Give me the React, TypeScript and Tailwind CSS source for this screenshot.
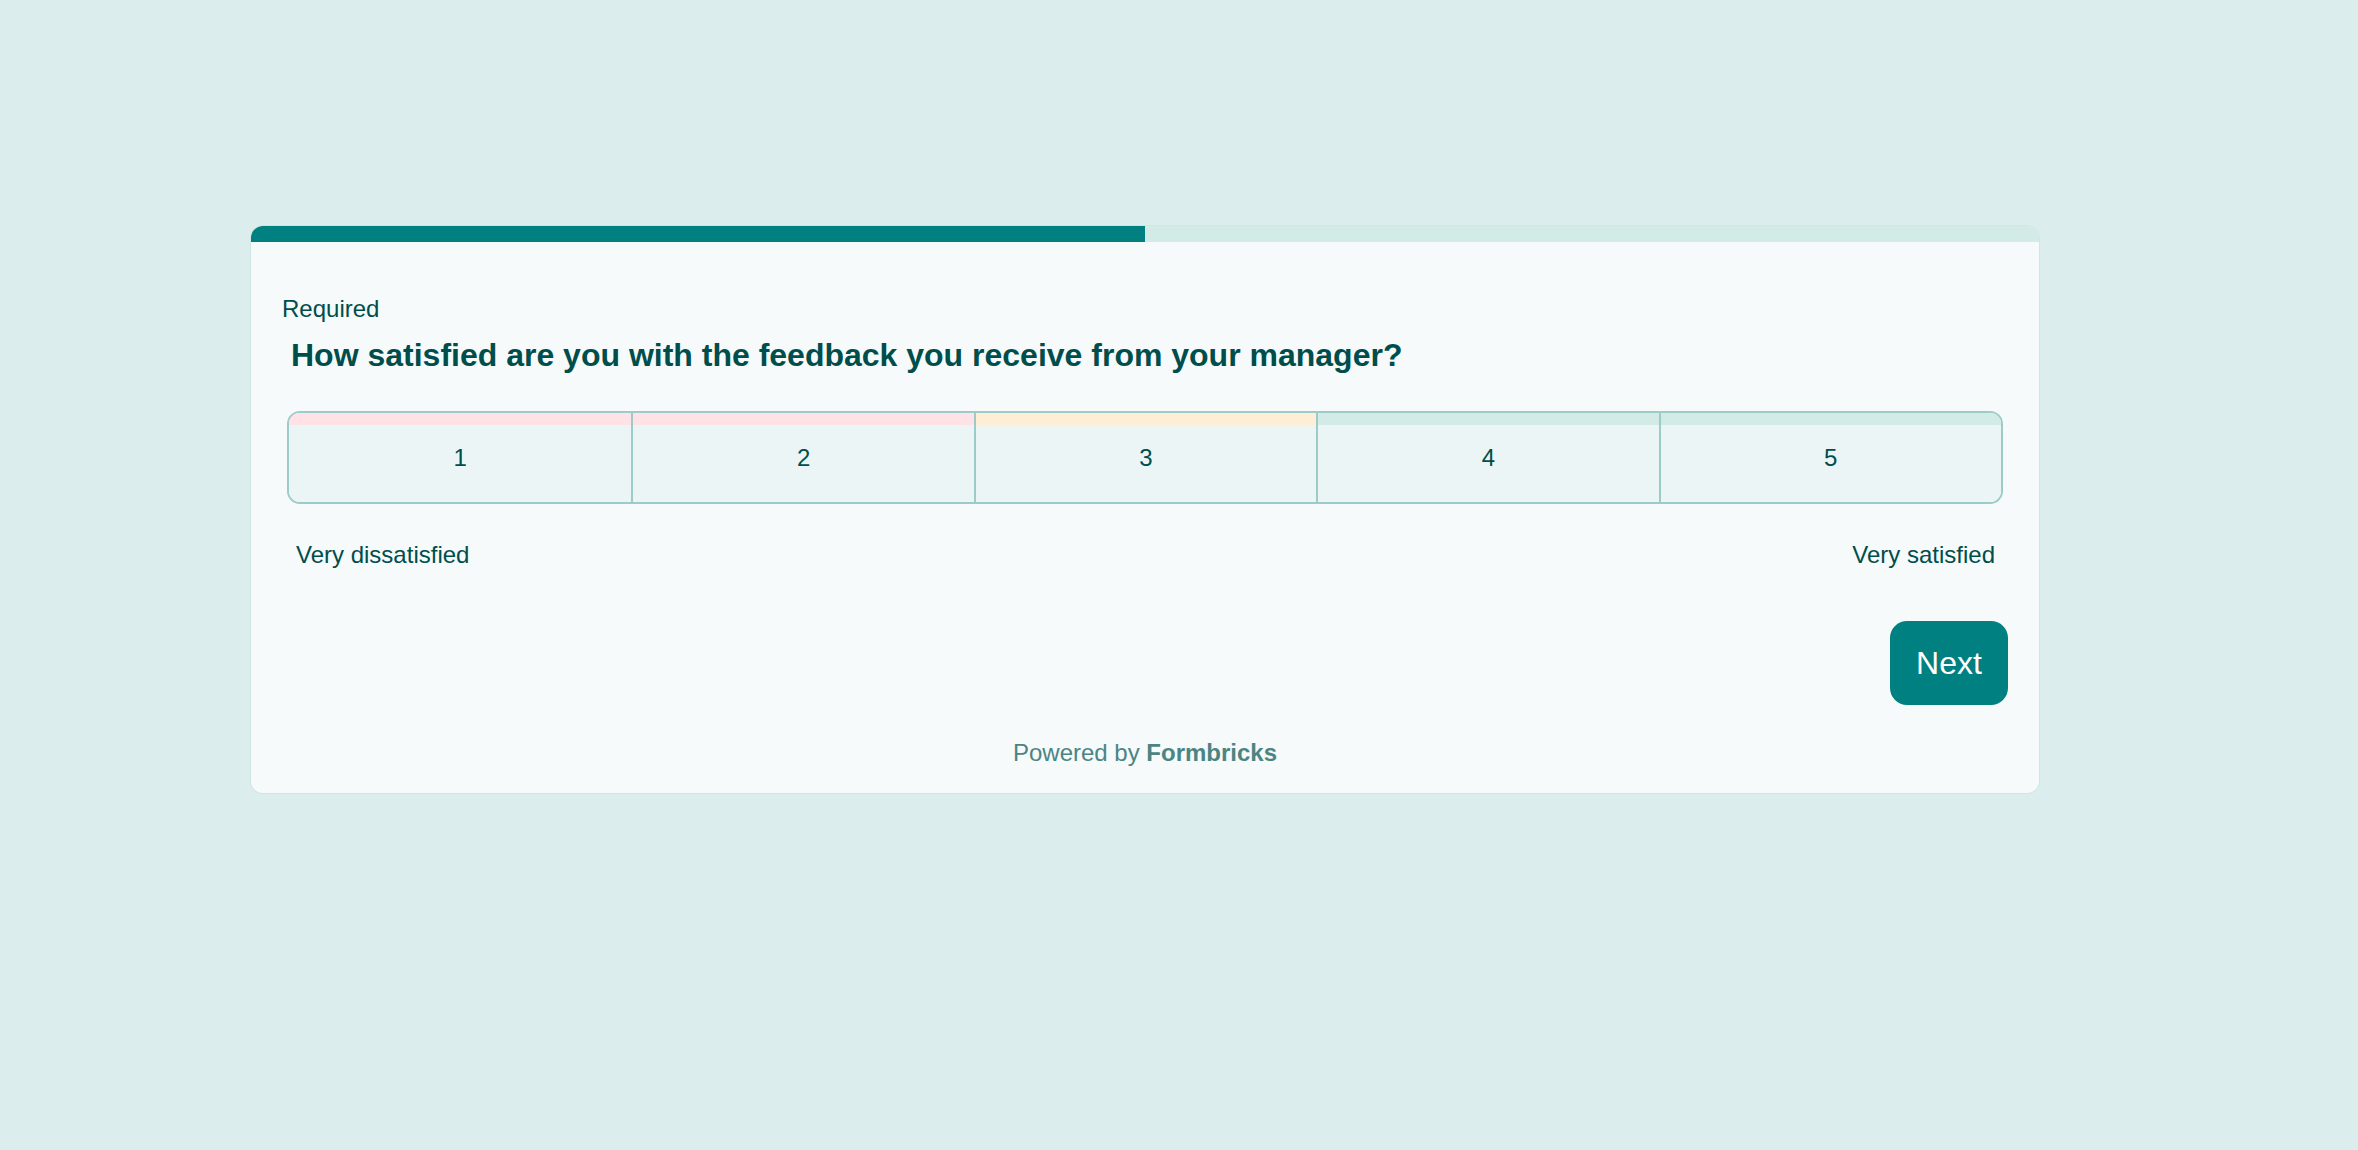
const ratings = [
  { value: 1, stripe: "bg-[#ffe2e5]" },
  { value: 2, stripe: "bg-[#ffe2e5]" },
  { value: 3, stripe: "bg-[#ffeed6]" },
  { value: 4, stripe: "bg-[#d2ebe6]" },
  { value: 5, stripe: "bg-[#d2ebe6]" },
];

export default function App() {
  return (
    <div className="min-h-[1150px] w-full bg-[#dbeeed] pl-[251px] pt-[226px] font-['Liberation_Sans',Arial,sans-serif] text-[#004e4b]">
      <div className="w-[1788px] overflow-hidden rounded-[12px] bg-[#f6fafb] shadow-[0_0_0_1px_#cfe7e3]">
        {/* progress */}
        <div className="flex h-[16px] w-full bg-[#d2ebe6]">
          <div className="h-full w-1/2 bg-[#008080]" />
        </div>

        <div className="flex flex-col px-[31px] pb-[24px] pt-[51px]">
          <p className="text-[24px] leading-[32px]">Required</p>
          <h1 className="mt-[10px] pl-[9px] text-[32px] font-bold leading-[40px]">
            How satisfied are you with the feedback you receive from your manager?
          </h1>

          <div className="mx-[5px] mt-[36px] grid grid-cols-5 overflow-hidden rounded-[13px] border-2 border-[#9ccbc8]">
            {ratings.map((r, i) => (
              <button
                key={r.value}
                type="button"
                className={`flex h-[89px] flex-col bg-[#ecf5f6] ${i > 0 ? "border-l-2 border-[#9ccbc8]" : ""}`}
              >
                <span className={`block h-[12px] w-full ${r.stripe}`} />
                <span className="flex flex-1 items-center justify-center pb-[12px] text-[24px] leading-[32px]">
                  {r.value}
                </span>
              </button>
            ))}
          </div>

          <div className="mt-[35px] flex justify-between pl-[14px] pr-[13px] text-[24px] leading-[32px]">
            <span>Very dissatisfied</span>
            <span>Very satisfied</span>
          </div>

          <div className="mt-[50px] flex justify-end">
            <button
              type="button"
              className="flex h-[84px] w-[118px] items-center justify-center rounded-[17px] bg-[#008080] text-[32px] text-white"
            >
              Next
            </button>
          </div>

          <p className="mt-[32px] text-center text-[24px] leading-[32px] text-[#4b8583]">
            Powered by <span className="font-bold">Formbricks</span>
          </p>
        </div>
      </div>
    </div>
  );
}
